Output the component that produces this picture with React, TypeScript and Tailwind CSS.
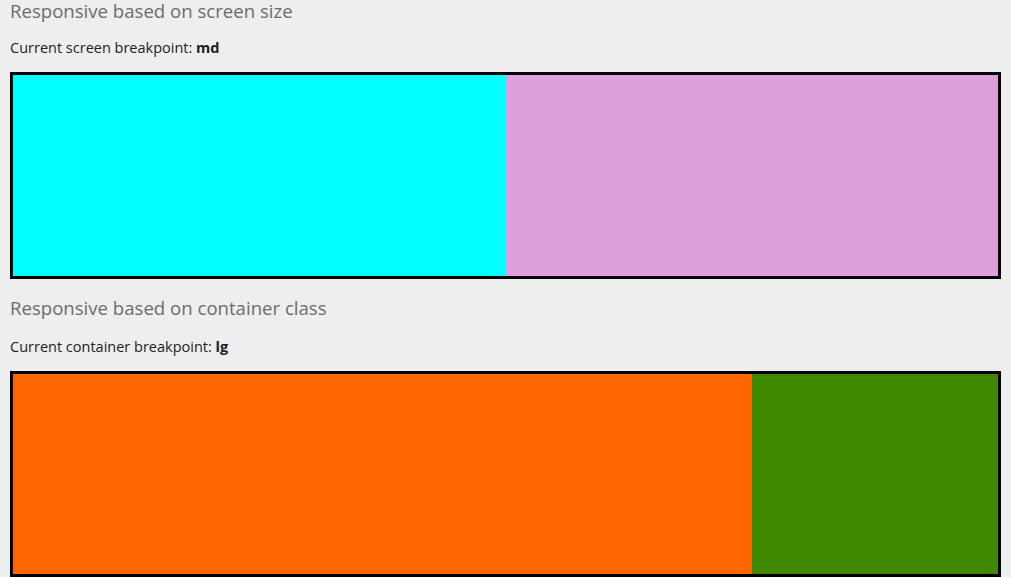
export default function App() {
  return (
    <div className="min-h-[577px] bg-[#eeeeee] px-[10px] font-['Open_Sans',sans-serif]">
      <section>
        <h2 className="h-[22px] text-[18.6px] leading-[22px] text-[#6c6c6c]">Responsive based on screen size</h2>
        <p className="mt-[16px] h-[20px] text-[14.5px] leading-[20px] text-[#222222]">
          Current screen breakpoint: <b className="font-bold">md</b>
        </p>
        <div className="mt-[14px] flex h-[207px] border-[3px] border-black">
          <div className="w-1/2 bg-[#00ffff]" />
          <div className="w-1/2 bg-[#dda0dd]" />
        </div>
      </section>
      <section className="mt-[18px]">
        <h2 className="h-[22px] text-[18.6px] leading-[22px] text-[#6c6c6c]">Responsive based on container class</h2>
        <p className="mt-[18px] h-[20px] text-[14.5px] leading-[20px] text-[#222222]">
          Current container breakpoint: <b className="font-bold">lg</b>
        </p>
        <div className="mt-[14px] flex h-[206px] border-[3px] border-black">
          <div className="w-3/4 bg-[#ff6600]" />
          <div className="w-1/4 bg-[#3f8800]" />
        </div>
      </section>
    </div>
  );
}
